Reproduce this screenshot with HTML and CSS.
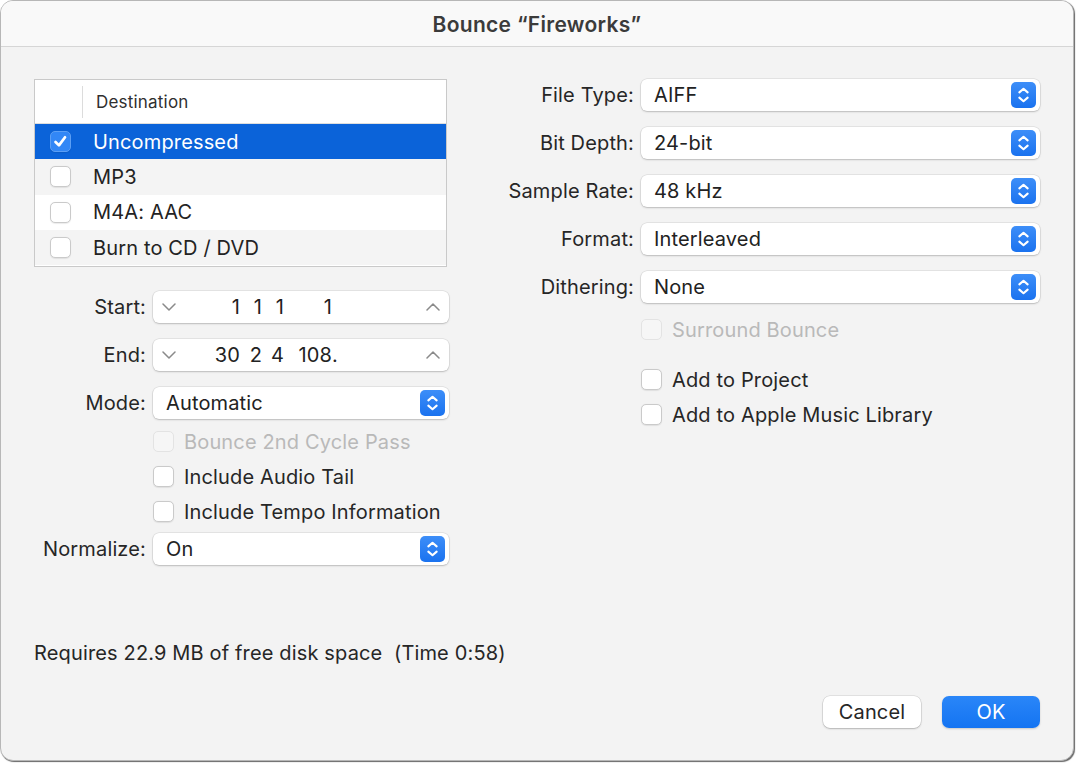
FILE: index.html
```html
<!DOCTYPE html>
<html lang="en">
<head>
<meta charset="utf-8">
<title>Bounce “Fireworks”</title>
<link rel="stylesheet" href="styles.css">
</head>
<body>
<div class="dialog">
  <div class="titlebar">Bounce “Fireworks”</div>

  <div class="content">
    <div class="col-left">
      <div class="dest-table">
        <div class="dest-head"><span class="head-sep"></span><span>Destination</span></div>
        <div class="dest-row selected"><span class="cb checked"><svg viewBox="0 0 21 21"><path d="M5 11 L8.8 14.8 L15.5 5.8"/></svg></span><span>Uncompressed</span></div>
        <div class="dest-row alt"><span class="cb"></span><span>MP3</span></div>
        <div class="dest-row"><span class="cb"></span><span>M4A: AAC</span></div>
        <div class="dest-row alt"><span class="cb"></span><span>Burn to CD / DVD</span></div>
      </div>

      <div class="form-left">
        <div class="field-row first">
          <label class="lbl">Start:</label>
          <div class="stepper">
            <svg class="chev" viewBox="0 0 14 8"><path d="M1 1 L7 7 L13 1"/></svg>
            <div class="pos">
              <span class="seg bar">1</span><span class="seg beat">1</span><span class="seg div">1</span><span class="seg tick">1</span>
            </div>
            <svg class="chev" viewBox="0 0 14 8"><path d="M1 7 L7 1 L13 7"/></svg>
          </div>
        </div>
        <div class="field-row">
          <label class="lbl">End:</label>
          <div class="stepper">
            <svg class="chev" viewBox="0 0 14 8"><path d="M1 1 L7 7 L13 1"/></svg>
            <div class="pos">
              <span class="seg bar">30</span><span class="seg beat">2</span><span class="seg div">4</span><span class="seg tick">108<span class="dot">.</span></span>
            </div>
            <svg class="chev" viewBox="0 0 14 8"><path d="M1 7 L7 1 L13 7"/></svg>
          </div>
        </div>
        <div class="field-row">
          <label class="lbl">Mode:</label>
          <div class="popup"><span>Automatic</span><span class="arrows"><svg viewBox="0 0 24 24"><path d="M8 9.5 L12 6 L16 9.5 M8 14.5 L12 18 L16 14.5"/></svg></span></div>
        </div>

        <div class="checks">
          <div class="check-row disabled"><span class="cb"></span><span>Bounce 2nd Cycle Pass</span></div>
          <div class="check-row"><span class="cb"></span><span>Include Audio Tail</span></div>
          <div class="check-row"><span class="cb"></span><span>Include Tempo Information</span></div>
        </div>

        <div class="field-row norm">
          <label class="lbl">Normalize:</label>
          <div class="popup"><span>On</span><span class="arrows"><svg viewBox="0 0 24 24"><path d="M8 9.5 L12 6 L16 9.5 M8 14.5 L12 18 L16 14.5"/></svg></span></div>
        </div>
      </div>
    </div>

    <div class="col-right">
      <div class="field-row">
        <label class="lbl">File Type:</label>
        <div class="popup"><span>AIFF</span><span class="arrows"><svg viewBox="0 0 24 24"><path d="M8 9.5 L12 6 L16 9.5 M8 14.5 L12 18 L16 14.5"/></svg></span></div>
      </div>
      <div class="field-row">
        <label class="lbl">Bit Depth:</label>
        <div class="popup"><span>24-bit</span><span class="arrows"><svg viewBox="0 0 24 24"><path d="M8 9.5 L12 6 L16 9.5 M8 14.5 L12 18 L16 14.5"/></svg></span></div>
      </div>
      <div class="field-row">
        <label class="lbl">Sample Rate:</label>
        <div class="popup"><span>48 kHz</span><span class="arrows"><svg viewBox="0 0 24 24"><path d="M8 9.5 L12 6 L16 9.5 M8 14.5 L12 18 L16 14.5"/></svg></span></div>
      </div>
      <div class="field-row">
        <label class="lbl">Format:</label>
        <div class="popup"><span>Interleaved</span><span class="arrows"><svg viewBox="0 0 24 24"><path d="M8 9.5 L12 6 L16 9.5 M8 14.5 L12 18 L16 14.5"/></svg></span></div>
      </div>
      <div class="field-row">
        <label class="lbl">Dithering:</label>
        <div class="popup"><span>None</span><span class="arrows"><svg viewBox="0 0 24 24"><path d="M8 9.5 L12 6 L16 9.5 M8 14.5 L12 18 L16 14.5"/></svg></span></div>
      </div>

      <div class="right-checks">
        <div class="check-row disabled"><span class="cb"></span><span>Surround Bounce</span></div>
        <div class="check-group">
          <div class="check-row"><span class="cb"></span><span>Add to Project</span></div>
          <div class="check-row"><span class="cb"></span><span>Add to Apple Music Library</span></div>
        </div>
      </div>
    </div>
  </div>

  <div class="status">Requires 22.9 MB of free disk space&nbsp; (Time 0:58)</div>

  <div class="buttons">
    <button class="btn">Cancel</button>
    <button class="btn primary">OK</button>
  </div>
</div>
</body>
</html>
```

FILE: styles.css
```css
* { box-sizing: border-box; }

html, body {
  margin: 0;
  padding: 0;
  background: #ffffff;
}

body {
  width: 1076px;
  height: 764px;
  font-family: Inter, "Noto Sans", "Liberation Sans", sans-serif;
  color: #262626;
  letter-spacing: 0.15px;
}

.dialog {
  width: 1074px;
  height: 761px;
  background: #f3f3f3;
  border: 1px solid #b7b7b7;
  border-radius: 13px;
  box-shadow: 1px 1px 1px rgba(0, 0, 0, 0.6);
  overflow: hidden;
  display: flex;
  flex-direction: column;
}

/* title */
.titlebar {
  height: 46px;
  flex: none;
  background: #f9f9f9;
  border-bottom: 1px solid #d6d6d6;
  display: flex;
  align-items: center;
  justify-content: center;
  font-weight: 600;
  font-size: 21px;
  color: #3b3b3b;
  letter-spacing: 0.3px;
  padding-top: 1px;
}

.content {
  display: flex;
  padding: 32px 0 0 33px;
  height: 556px;
  flex: none;
}

/* left column */
.col-left {
  width: 417px;
  flex: none;
}

.dest-table {
  width: 413px;
  height: 188px;
  border: 1px solid #c9c9c9;
  background: #ffffff;
  font-size: 20px;
}

.dest-head {
  height: 44px;
  display: flex;
  align-items: center;
  font-size: 17px;
  letter-spacing: 0.2px;
  color: #2f2f2f;
  border-bottom: 1px solid #dedede;
}

.head-sep {
  width: 1px;
  height: 32px;
  background: #dcdcdc;
  margin: 0 13px 0 47px;
}

.dest-row {
  height: 35.3px;
  display: flex;
  align-items: center;
  padding-left: 15px;
  gap: 22px;
  color: #232323;
}

.dest-row.alt { background: #f4f4f4; }

.dest-row.selected {
  background: #0b63d9;
  color: #ffffff;
}

.cb {
  width: 21px;
  height: 21px;
  flex: none;
  border-radius: 5px;
  background: #ffffff;
  border: 1px solid #cacaca;
  box-shadow: 0 0.5px 1px rgba(0, 0, 0, 0.08);
  display: inline-flex;
}

.cb.checked {
  background: #3287f6;
  border: 1px solid #5c9ff5;
}

.cb svg { width: 19px; height: 19px; }
.cb svg path {
  fill: none;
  stroke: #ffffff;
  stroke-width: 3;
  stroke-linecap: round;
  stroke-linejoin: round;
}

/* labelled controls */
.field-row {
  display: flex;
  align-items: center;
  gap: 7px;
  height: 32px;
}

.lbl {
  text-align: right;
  font-size: 20px;
  color: #262626;
  white-space: nowrap;
}

.form-left .lbl { width: 112px; }
.form-left .field-row { margin-top: 16px; }
.form-left .field-row.first { margin-top: 24px; }
.form-left .field-row.norm { margin-top: 4px; }

.popup, .stepper {
  flex: none;
  height: 32px;
  background: #ffffff;
  border-radius: 6px;
  box-shadow: 0 0 0 0.5px rgba(0, 0, 0, 0.12), 0 1px 2px rgba(0, 0, 0, 0.18);
  display: flex;
  align-items: center;
  font-size: 20px;
  color: #222222;
}

.form-left .popup, .form-left .stepper { width: 296px; }

.popup {
  justify-content: space-between;
  padding: 0 4px 0 13px;
}

.arrows {
  width: 25px;
  height: 26px;
  border-radius: 5px;
  background: linear-gradient(#3d8ef8, #1a72ef);
  display: inline-flex;
}

.arrows svg { width: 25px; height: 26px; }
.arrows path {
  fill: none;
  stroke: #ffffff;
  stroke-width: 2;
  stroke-linecap: round;
  stroke-linejoin: round;
}

.stepper {
  padding: 0 9px 0 9px;
  justify-content: space-between;
}

.chev { width: 14px; height: 8px; flex: none; }
.chev path {
  fill: none;
  stroke: #8a8a8a;
  stroke-width: 1.5;
  stroke-linecap: round;
  stroke-linejoin: round;
}

.pos {
  flex: 1;
  display: flex;
  padding-left: 1px;
}

.seg { text-align: right; display: inline-block; }
.seg.bar { width: 63px; }
.seg.beat { width: 22px; }
.seg.div { width: 22px; }
.seg.tick { width: 48px; }

.dot {
  display: inline-block;
  width: 0;
  overflow: visible;
}

/* checkboxes */
.checks {
  margin-top: 5px;
  padding-left: 119px;
}

.check-row {
  height: 35px;
  display: flex;
  align-items: center;
  gap: 10px;
  font-size: 20px;
  color: #262626;
}

.check-row.disabled { color: #b9b9b9; }
.check-row.disabled .cb {
  border-color: #e3e3e3;
  box-shadow: none;
  background: #f6f6f6;
}

/* right column */
.col-right {
  width: 591px;
  flex: none;
  display: flex;
  flex-direction: column;
  gap: 16px;
}

.col-right .lbl { width: 183px; }
.col-right .popup { width: 399px; }

.right-checks {
  margin-top: -7px;
  padding-left: 190px;
}

.check-group { margin-top: 15px; }

/* footer */
.status {
  padding-left: 33px;
  font-size: 20px;
  color: #262626;
  height: 30px;
  line-height: 30px;
  margin-top: 35px;
}

.buttons {
  display: flex;
  justify-content: flex-end;
  gap: 21px;
  padding-right: 33px;
  margin-top: 28px;
}

.btn {
  width: 98px;
  height: 32px;
  border: none;
  border-radius: 7px;
  background: #ffffff;
  box-shadow: 0 0 0 0.5px rgba(0, 0, 0, 0.14), 0 1px 2px rgba(0, 0, 0, 0.2);
  font-family: inherit;
  font-size: 20px;
  letter-spacing: 0.15px;
  color: #262626;
  padding: 0;
}

.btn.primary {
  background: linear-gradient(#2a86f8, #1474f2);
  color: #ffffff;
  box-shadow: 0 1px 2px rgba(0, 0, 0, 0.18);
}
```
